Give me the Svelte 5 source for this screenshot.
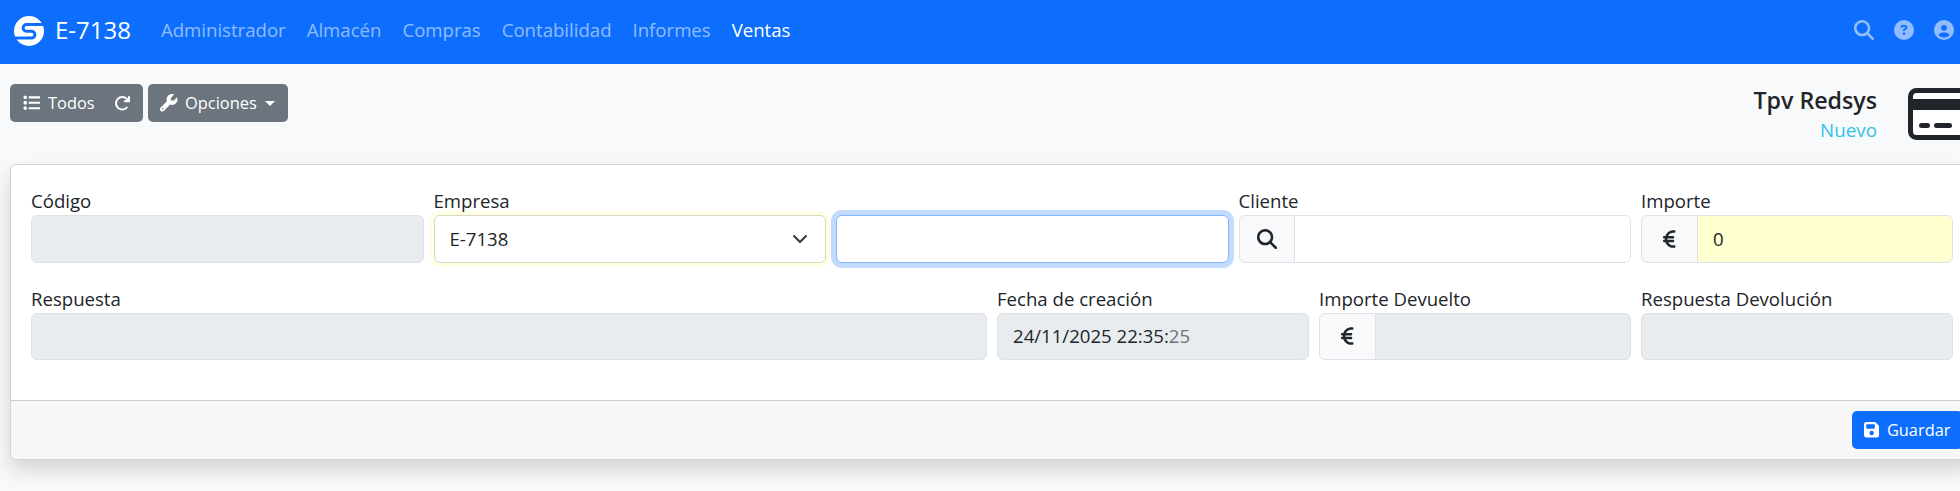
<script>
  // Font Awesome style glyphs, viewBox width and path
  const icons = {
    list: [512, "M40 48C26.7 48 16 58.7 16 72v48c0 13.3 10.7 24 24 24H88c13.3 0 24-10.7 24-24V72c0-13.3-10.7-24-24-24H40zM192 64c-17.7 0-32 14.3-32 32s14.3 32 32 32H480c17.7 0 32-14.3 32-32s-14.3-32-32-32H192zm0 160c-17.7 0-32 14.3-32 32s14.3 32 32 32H480c17.7 0 32-14.3 32-32s-14.3-32-32-32H192zm0 160c-17.7 0-32 14.3-32 32s14.3 32 32 32H480c17.7 0 32-14.3 32-32s-14.3-32-32-32H192zM16 232v48c0 13.3 10.7 24 24 24H88c13.3 0 24-10.7 24-24V232c0-13.3-10.7-24-24-24H40c-13.3 0-24 10.7-24 24zM40 368c-13.3 0-24 10.7-24 24v48c0 13.3 10.7 24 24 24H88c13.3 0 24-10.7 24-24V392c0-13.3-10.7-24-24-24H40z"],
    redo: [512, "M386.3 160H336c-17.7 0-32 14.3-32 32s14.3 32 32 32H464c17.7 0 32-14.3 32-32V64c0-17.7-14.3-32-32-32s-32 14.3-32 32v51.2L414.4 97.6c-87.5-87.5-229.3-87.5-316.8 0s-87.5 229.3 0 316.8s229.3 87.5 316.8 0c12.5-12.5 12.5-32.8 0-45.3s-32.8-12.5-45.3 0c-62.5 62.5-163.8 62.5-226.3 0s-62.5-163.8 0-226.3s163.8-62.5 226.3 0L386.3 160z"],
    wrench: [512, "M352 320c88.4 0 160-71.6 160-160c0-15.3-2.2-30.1-6.2-44.2c-3.1-10.8-16.4-13.2-24.3-5.3l-76.8 76.8c-3 3-7.1 4.7-11.3 4.7H336c-8.8 0-16-7.2-16-16V118.6c0-4.2 1.7-8.3 4.7-11.3l76.8-76.8c7.9-7.9 5.4-21.2-5.3-24.3C382.1 2.2 367.3 0 352 0C263.6 0 192 71.6 192 160c0 19.1 3.4 37.5 9.5 54.5L19.9 396.1C7.2 408.8 0 426.1 0 444.1C0 481.6 30.4 512 67.9 512c18 0 35.3-7.2 48-19.9L297.5 310.5c17 6.2 35.4 9.5 54.5 9.5zM80 408a24 24 0 1 1 0 48 24 24 0 1 1 0-48z"],
    search: [512, "M416 208c0 45.9-14.9 88.3-40 122.7L502.6 457.4c12.5 12.5 12.5 32.8 0 45.3s-32.8 12.5-45.3 0L330.7 376c-34.4 25.2-76.8 40-122.7 40C93.1 416 0 322.9 0 208S93.1 0 208 0S416 93.1 416 208zM208 352a144 144 0 1 0 0-288 144 144 0 1 0 0 288z"],
    help: [512, "M256 512A256 256 0 1 0 256 0a256 256 0 1 0 0 512zM169.8 165.3c7.9-22.3 29.1-37.3 52.8-37.3h58.3c34.9 0 63.1 28.3 63.1 63.1c0 22.6-12.1 43.5-31.7 54.8L280 264.4c-.2 13-10.9 23.6-24 23.6c-13.3 0-24-10.7-24-24V250.5c0-8.6 4.6-16.5 12.1-20.8l44.3-25.4c4.7-2.7 7.6-7.7 7.6-13.1c0-8.4-6.8-15.1-15.1-15.1H222.6c-3.4 0-6.4 2.1-7.5 5.3l-.4 1.2c-4.4 12.5-18.2 19-30.6 14.6s-19-18.2-14.6-30.6l.4-1.2zM224 352a32 32 0 1 1 64 0 32 32 0 1 1 -64 0z"],
    user: [512, "M399 384.2C376.9 345.8 335.4 320 288 320H224c-47.4 0-88.9 25.8-111 64.2c35.2 39.2 86.2 63.8 143 63.8s107.8-24.7 143-63.8zM0 256a256 256 0 1 1 512 0A256 256 0 1 1 0 256zm256 16a72 72 0 1 0 0-144 72 72 0 1 0 0 144z"],
    save: [448, "M64 32C28.7 32 0 60.7 0 96V416c0 35.3 28.7 64 64 64H384c35.3 0 64-28.7 64-64V173.3c0-17-6.7-33.3-18.7-45.3L352 50.7C340 38.7 323.7 32 306.7 32H64zm0 96c0-17.7 14.3-32 32-32H288c17.7 0 32 14.3 32 32v64c0 17.7-14.3 32-32 32H96c-17.7 0-32-14.3-32-32V128zM224 288a64 64 0 1 1 0 128 64 64 0 1 1 0-128z"],
    euro: [320, "M48.1 240c-.1 2.7-.1 5.3-.1 8v16c0 2.7 0 5.3 .1 8H32c-17.7 0-32 14.3-32 32s14.3 32 32 32H60.3C89.9 419.9 170 480 264 480h24c17.7 0 32-14.3 32-32s-14.3-32-32-32H264c-57.9 0-108.2-32.4-133.9-80H256c17.7 0 32-14.3 32-32s-14.3-32-32-32H112.2c-.1-2.6-.2-5.3-.2-8V248c0-2.7 .1-5.4 .2-8H256c17.7 0 32-14.3 32-32s-14.3-32-32-32H130.1c25.7-47.6 76-80 133.9-80h24c17.7 0 32-14.3 32-32s-14.3-32-32-32H264C170 32 89.9 92.1 60.3 176H32c-17.7 0-32 14.3-32 32s14.3 32 32 32H48.1z"],
  };

  const menu = ["Administrador", "Almacén", "Compras", "Contabilidad", "Informes", "Ventas"];
</script>

{#snippet icon(name, size)}
  <svg class="icon" width={size * icons[name][0] / 512} height={size} viewBox="0 0 {icons[name][0]} 512" fill="currentColor" aria-hidden="true">
    <path d={icons[name][1]} />
  </svg>
{/snippet}

<div class="page">
  <nav class="navbar">
    <a class="brand" href="#top">
      <svg class="logo" width="30" height="30" viewBox="0 0 30 30" aria-hidden="true">
        <circle cx="15" cy="15" r="15" fill="#fff" />
        <path d="M31 8.5H12.5a3.4 3.4 0 0 0 0 6.8h5a3.4 3.4 0 0 1 0 6.8H-1" fill="none" stroke="#0d6efd" stroke-width="3" />
      </svg>
      <span>E-7138</span>
    </a>
    <ul class="menu">
      {#each menu as item}
        <li class:active={item === "Ventas"}>{item}</li>
      {/each}
    </ul>
    <div class="nav-icons">
      {@render icon("search", 20)}
      {@render icon("help", 20)}
      {@render icon("user", 20)}
    </div>
  </nav>

  <header class="toolbar">
    <div class="actions">
      <div class="btn grey group">
        <span class="part">{@render icon("list", 17.5)} Todos</span>
        {@render icon("redo", 16.5)}
      </div>
      <div class="btn grey">
        {@render icon("wrench", 17.5)} Opciones <i class="caret"></i>
      </div>
    </div>
    <div class="title">
      <div class="title-text">
        <h1>Tpv Redsys</h1>
        <p>Nuevo</p>
      </div>
      <svg class="card-icon" width="66" height="52" viewBox="0 0 66 52" aria-hidden="true">
        <rect x="2.5" y="2.5" width="63" height="47" rx="6" fill="#fff" stroke="#212529" stroke-width="5" />
        <rect x="2" y="11" width="64" height="11" fill="#212529" />
        <rect x="11" y="35" width="11" height="5" rx="2.5" fill="#212529" />
        <rect x="26" y="35" width="18" height="5" rx="2.5" fill="#212529" />
      </svg>
    </div>
  </header>

  <main class="card">
    <div class="card-body">
      <div class="field s5">
        <span class="label">Código</span>
        <div class="control off"></div>
      </div>
      <div class="field s5">
        <span class="label">Empresa</span>
        <div class="control select">
          E-7138
          <svg width="16" height="16" viewBox="0 0 16 16" aria-hidden="true">
            <path d="M2 5l6 6 6-6" fill="none" stroke="#343a40" stroke-width="2" stroke-linecap="round" stroke-linejoin="round" />
          </svg>
        </div>
      </div>
      <div class="field s5">
        <span class="label">&nbsp;</span>
        <div class="control focus"></div>
      </div>
      <div class="field s5">
        <span class="label">Cliente</span>
        <div class="input-group">
          <span class="addon narrow">{@render icon("search", 20)}</span>
          <div class="control"></div>
        </div>
      </div>
      <div class="field s4">
        <span class="label">Importe</span>
        <div class="input-group">
          <span class="addon">{@render icon("euro", 20)}</span>
          <div class="control required">0</div>
        </div>
      </div>

      <div class="field s12">
        <span class="label">Respuesta</span>
        <div class="control off"></div>
      </div>
      <div class="field s4">
        <span class="label">Fecha de creación</span>
        <div class="control off">24/11/2025 22:35:<span class="seconds">25</span></div>
      </div>
      <div class="field s4">
        <span class="label">Importe Devuelto</span>
        <div class="input-group">
          <span class="addon">{@render icon("euro", 20)}</span>
          <div class="control off"></div>
        </div>
      </div>
      <div class="field s4">
        <span class="label">Respuesta Devolución</span>
        <div class="control off"></div>
      </div>
    </div>
    <footer class="card-footer">
      <div class="btn blue">{@render icon("save", 17.5)} Guardar</div>
    </footer>
  </main>
</div>

<style>
  :global(html), :global(body) {
    overflow: hidden;
  }

  .page {
    width: 1984px;
    height: 491px;
    background: #f8f9fa;
    font-family: "Open Sans", "Liberation Sans", sans-serif;
    font-size: 18.6px;
    line-height: 30px;
    color: #212529;
  }

  .navbar {
    height: 64px;
    background: #0d6efd;
    display: flex;
    align-items: center;
    padding: 0 0 4px 14px;
    box-sizing: border-box;
  }
  .brand {
    display: flex;
    align-items: center;
    gap: 11px;
    color: #fff;
    font-size: 24px;
    text-decoration: none;
    margin-right: 20px;
  }
  .logo {
    margin-top: 1px;
  }
  .menu {
    list-style: none;
    display: flex;
    gap: 21px;
    margin: 0;
    padding: 0 0 0 10px;
    color: rgba(255, 255, 255, 0.55);
  }
  .menu .active {
    color: #fff;
    font-weight: 500;
  }
  .nav-icons {
    margin-left: auto;
    display: flex;
    gap: 20px;
    padding-right: 30px;
    color: rgba(255, 255, 255, 0.55);
  }

  .toolbar {
    display: flex;
    justify-content: space-between;
    padding: 20px 10px 0;
    height: 100px;
    box-sizing: border-box;
  }
  .actions {
    display: flex;
    gap: 5px;
    align-items: flex-start;
  }
  .btn {
    display: inline-flex;
    align-items: center;
    gap: 7.5px;
    height: 38px;
    box-sizing: border-box;
    padding: 0 12.5px;
    border-radius: 5px;
    color: #fff;
    font-size: 16.4px;
  }
  .grey {
    background: #6c757d;
  }
  .blue {
    background: #0d6efd;
  }
  .group {
    gap: 19px;
  }
  .part {
    display: inline-flex;
    align-items: center;
    gap: 8px;
  }
  .caret {
    width: 0;
    height: 0;
    margin-left: 1px;
    border-top: 5px solid #fff;
    border-left: 5px solid transparent;
    border-right: 5px solid transparent;
  }

  .title {
    display: flex;
    gap: 31px;
    align-items: flex-start;
  }
  .title-text {
    text-align: right;
  }
  .title h1 {
    margin: 0;
    font-size: 23.2px;
    font-weight: 600;
    line-height: 33px;
  }
  .title p {
    margin: 0;
    color: #31c3e6;
    font-size: 18.8px;
    line-height: 26px;
  }
  .card-icon {
    margin-top: 4px;
  }

  .card {
    margin: 0 10px;
    background: #fff;
    border: 1px solid rgba(0, 0, 0, 0.175);
    border-radius: 6px;
    box-shadow: 0 10px 20px rgba(0, 0, 0, 0.15);
    overflow: hidden;
  }
  .card-body {
    display: grid;
    grid-template-columns: repeat(24, 1fr);
    gap: 20px 10px;
    padding: 20px 20px 40px;
  }
  .s4 {
    grid-column: span 4;
  }
  .s5 {
    grid-column: span 5;
  }
  .s12 {
    grid-column: span 12;
  }
  .label {
    display: block;
    height: 30px;
    padding-top: 1px;
    box-sizing: border-box;
  }
  .control {
    height: 47.5px;
    box-sizing: border-box;
    border: 1px solid #dee2e6;
    border-radius: 6px;
    padding: 0 15px;
    display: flex;
    align-items: center;
    background: #fff;
  }
  .off {
    background: #e9ecef;
  }
  .select {
    justify-content: space-between;
    padding-right: 17px;
    border-color: #d9d9c0;
    box-shadow: 0 0 0 4px #ffffe6;
  }
  .focus {
    border-color: #86b7fe;
    box-shadow: 0 0 0 5px rgba(13, 110, 253, 0.25);
  }
  .required {
    background: #ffffcf;
  }
  .seconds {
    color: #6c757d;
  }
  .input-group {
    display: flex;
  }
  .input-group .control {
    flex: 1;
    border-radius: 0 6px 6px 0;
    margin-left: -1px;
  }
  .addon {
    flex: none;
    width: 57px;
    height: 47.5px;
    box-sizing: border-box;
    display: flex;
    align-items: center;
    justify-content: center;
    border: 1px solid #dee2e6;
    border-radius: 6px 0 0 6px;
    background: #f8f9fa;
  }
  .addon.narrow {
    width: 56px;
  }

  .card-footer {
    display: flex;
    justify-content: flex-end;
    padding: 10px;
    background: #f7f7f7;
    border-top: 1px solid rgba(0, 0, 0, 0.175);
  }

  .icon {
    flex: none;
    display: block;
  }
</style>
